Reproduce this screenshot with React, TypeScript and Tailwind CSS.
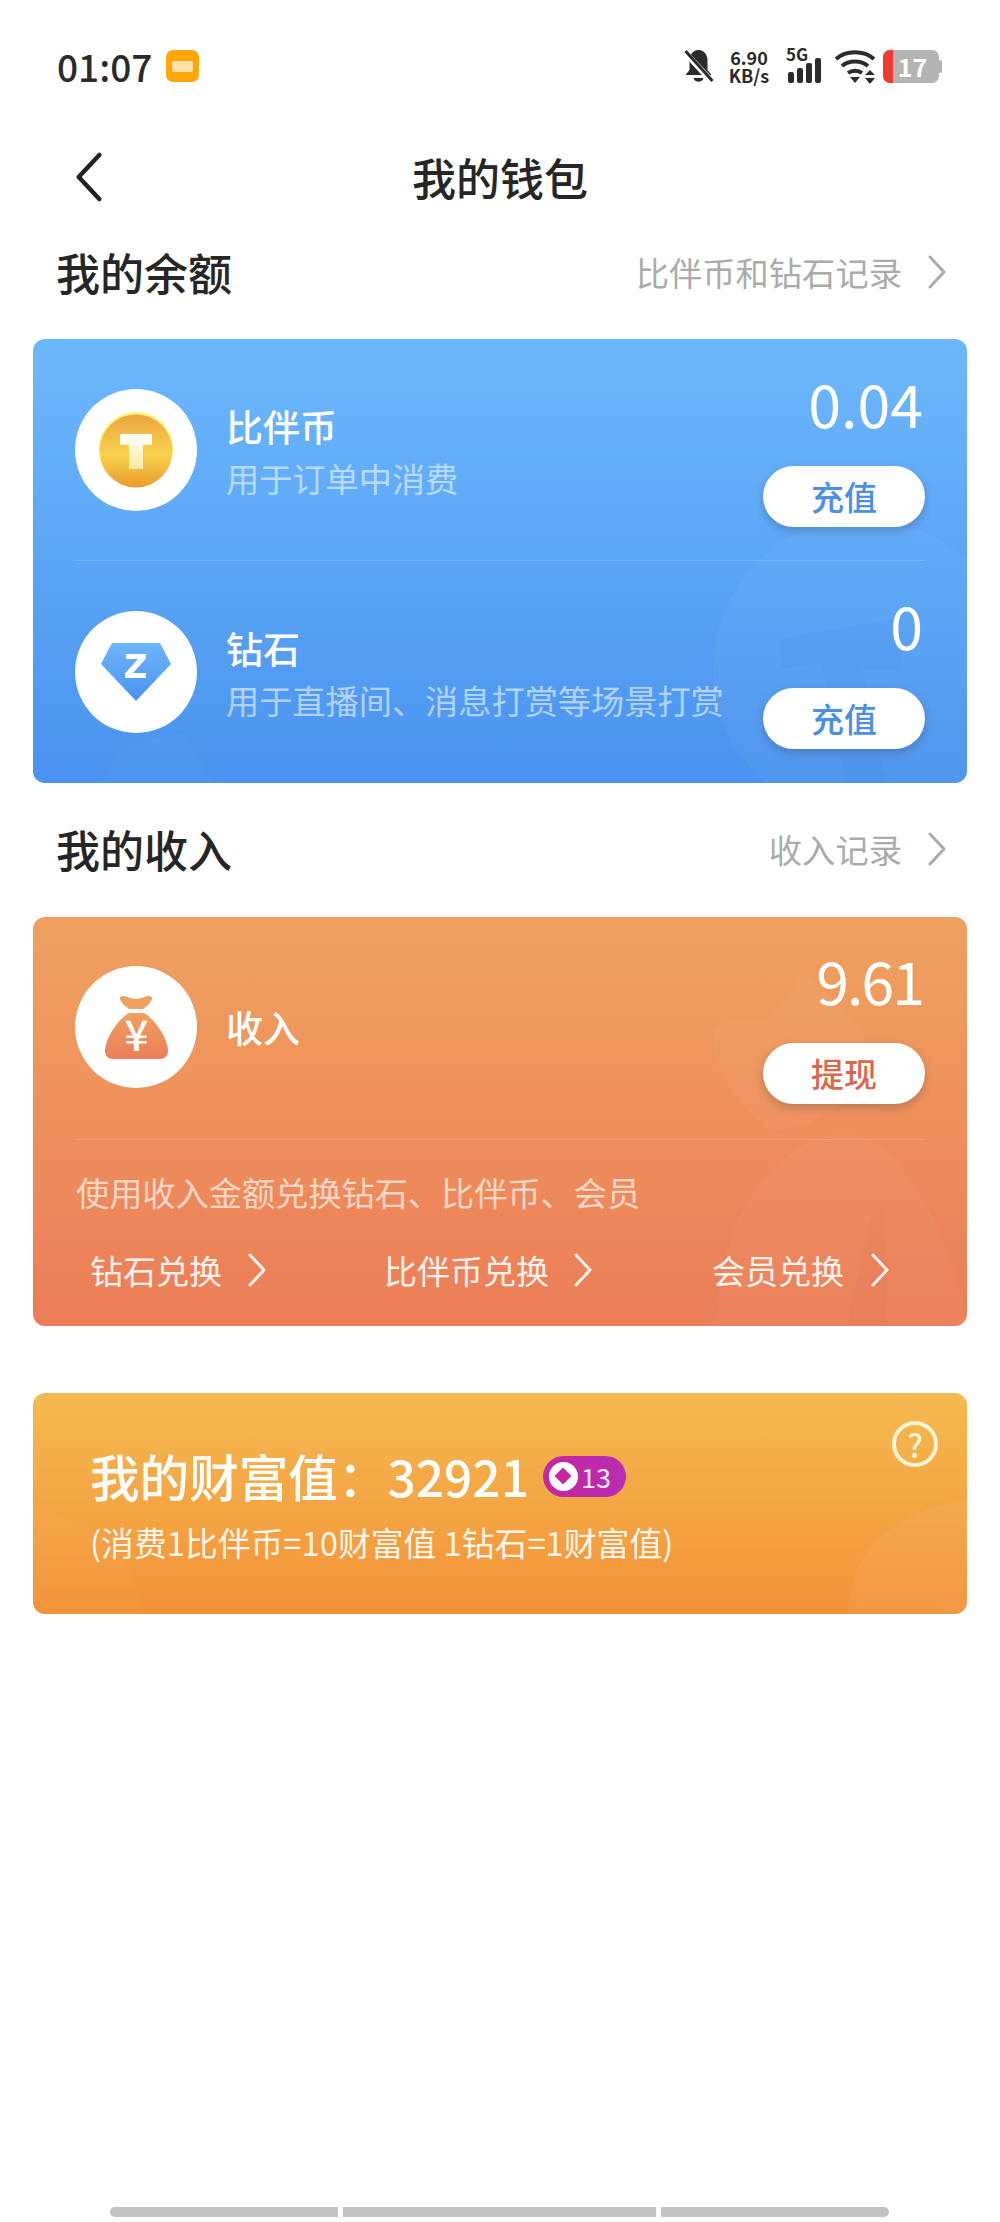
import { ReactNode } from "react";

function Chevron({ className = "", w = 20, h = 34, left = false }: { className?: string; w?: number; h?: number; left?: boolean }) {
  return (
    <svg width={w} height={h} viewBox="0 0 20 34" fill="none" className={className}>
      <path d={left ? "M17 2L3 17l14 15" : "M3 2l14 15L3 32"} stroke="currentColor" strokeWidth="3" strokeLinecap="round" strokeLinejoin="round" />
    </svg>
  );
}

function StatusBar() {
  return (
    <div className="flex h-[134px] items-center justify-between pb-[2px] pl-[57px] pr-[58px] text-[#2b2b2b]">
      <div className="flex items-center gap-[14px]">
        <span className="text-[37px] font-medium leading-none">01:07</span>
        <div className="flex h-[32px] w-[33px] items-center justify-center rounded-[7px] bg-[#ffa60a]">
          <div className="h-[11px] w-[21px] rounded-[2px] bg-[#ffe0a8]" />
        </div>
      </div>
      <div className="flex items-center">
        <svg width="33" height="36" viewBox="0 0 32 36">
          <path d="M16 2c-6 0-9 5-9 11v9l-4 5h26l-4-5v-9c0-6-3-11-9-11z" fill="#2b2b2b" />
          <path d="M11 30h10c-1 5-9 5-10 0z" fill="#2b2b2b" />
          <path d="M2 4l27 29" stroke="#fff" strokeWidth="6" />
          <path d="M3 3l27 30" stroke="#2b2b2b" strokeWidth="3" />
        </svg>
        <div className="ml-[11px] flex w-[46px] flex-col items-center text-[18px] font-bold leading-[18px]">
          <span>6.90</span>
          <span>KB/s</span>
        </div>
        <div className="relative ml-[14px] h-[34px] w-[38px]">
          <span className="absolute left-0 top-[-4px] text-[17px] font-bold leading-[18px]">5G</span>
          <svg width="38" height="34" viewBox="0 0 38 34" className="absolute left-0 top-0">
            <rect x="2" y="23" width="6" height="11" rx="2" fill="#2b2b2b" />
            <rect x="11" y="19" width="6" height="15" rx="2" fill="#2b2b2b" />
            <rect x="20" y="14" width="6" height="20" rx="2" fill="#2b2b2b" />
            <rect x="29" y="9" width="6" height="25" rx="2" fill="#2b2b2b" />
          </svg>
        </div>
        <svg width="44" height="36" viewBox="0 0 44 36" className="ml-[10px]">
          <g fill="none" stroke="#2b2b2b" strokeWidth="4">
            <path d="M2 11C12 2 30 2 40 11" />
            <path d="M8 18c7-6 19-6 26 0" />
            <path d="M14 25c4-3 10-3 14 0" />
          </g>
          <path d="M16 29h10l-5 6z" fill="#2b2b2b" />
          <path d="M36 22l5 5H31zM36 36l5-6H31z" fill="#2b2b2b" />
        </svg>
        <div className="relative ml-[5px] flex h-[33px] w-[56px] items-center justify-center rounded-[7px] bg-[#b4b4b4]">
          <div className="absolute inset-y-0 left-0 w-[10px] rounded-l-[7px] bg-[#ee3b2e]" />
          <span className="relative ml-[3px] text-[25px] font-bold leading-[33px] text-white">17</span>
        </div>
        <div className="h-[13px] w-[3px] rounded-r-[2px] bg-[#b4b4b4]" />
      </div>
    </div>
  );
}

function SectionHead({ title, link, className }: { title: string; link: string; className: string }) {
  return (
    <div className={`flex items-center justify-between pb-[3px] pl-[56px] pr-[53px] ${className}`}>
      <h2 className="text-[44px] font-medium leading-none text-[#262626]">{title}</h2>
      <div className="flex items-center gap-[25px] text-[#ababab]">
        <span className="text-[33.3px] leading-none">{link}</span>
        <Chevron />
      </div>
    </div>
  );
}

function CoinIcon() {
  return (
    <svg width="78" height="78" viewBox="0 0 78 78">
      <defs>
        <linearGradient id="coin" x1="0" y1="0" x2="0" y2="1">
          <stop offset="0" stopColor="#eca540" />
          <stop offset="0.55" stopColor="#f8d24e" />
          <stop offset="1" stopColor="#ea9a2c" />
        </linearGradient>
        <linearGradient id="coinT" x1="0" y1="0" x2="0" y2="1">
          <stop offset="0" stopColor="#ffffff" />
          <stop offset="1" stopColor="#fbe9a0" />
        </linearGradient>
      </defs>
      <circle cx="39" cy="38" r="37" fill="#fdf178" />
      <circle cx="39" cy="40" r="36.5" fill="url(#coin)" />
      <path d="M23 23h32v11H46v24H32V34h-9z" fill="url(#coinT)" />
    </svg>
  );
}

function DiamondIcon() {
  return (
    <svg width="72" height="60" viewBox="0 0 72 60">
      <defs>
        <linearGradient id="gem" x1="0" y1="0" x2="0" y2="1">
          <stop offset="0" stopColor="#6db6fb" />
          <stop offset="1" stopColor="#4a92ef" />
        </linearGradient>
      </defs>
      <path d="M12 1h48l11 21-35 37L1 22z" fill="url(#gem)" />
      <path d="M26 12h20v4.500L33 31h13v5H25v-4.500L38 17H26z" fill="#fff" />
    </svg>
  );
}

function BagIcon() {
  return (
    <svg width="65" height="64" viewBox="0 0 65 64" className="overflow-visible">
      <defs>
        <linearGradient id="bag" x1="0" y1="0" x2="0" y2="1">
          <stop offset="0" stopColor="#efa05f" />
          <stop offset="1" stopColor="#ec7e58" />
        </linearGradient>
      </defs>
      <path d="M19 1c4 0 8 3 13 3s9-3 13-3c3 0 4 2 2 5-2 4-6 6-8 8H25c-2-2-6-4-8-8-2-3-1-5 2-5z" fill="#efa05f" />
      <path d="M25 18h15c10 5 23 24 24 37 0 6-3 9-8 9H9c-5 0-8-3-8-9 1-13 14-32 24-37z" fill="url(#bag)" />
      <text x="32.500" y="56" textAnchor="middle" fontSize="42" fontWeight="500" fill="#fff" fontFamily="Noto Sans CJK SC, sans-serif">¥</text>
    </svg>
  );
}

function Avatar({ children }: { children: ReactNode }) {
  return (
    <div className="mt-[20px] flex h-[122px] w-[122px] shrink-0 items-center justify-center rounded-full bg-white">
      {children}
    </div>
  );
}

function Amount({ value, action, color, tight }: { value: string; action: string; color: string; tight?: boolean }) {
  return (
    <div className="ml-auto flex flex-col items-end">
      <span className={`mr-[2px] text-[59px] leading-[68px] text-white ${tight ? "tracking-[-2px]" : ""}`}>{value}</span>
      <button className={`mt-[29px] h-[61px] w-[162px] rounded-full bg-white text-[33px] font-medium leading-none shadow-[0_4px_8px_rgba(60,60,60,0.28)] ${color}`}>
        {action}
      </button>
    </div>
  );
}

function BalanceRow({ icon, title, sub, value }: { icon: ReactNode; title: string; sub: string; value: string }) {
  return (
    <div className="relative flex h-[221px] pl-[42px] pr-[42px] pt-[30px]">
      <Avatar>{icon}</Avatar>
      <div className="ml-[29px] mt-[34px]">
        <p className="text-[37px] font-medium leading-[47px] text-white">{title}</p>
        <p className="mt-[3px] text-[33.2px] leading-[50px] text-white/55">{sub}</p>
      </div>
      <Amount value={value} action="充值" color="text-[#4a8fe2]" />
    </div>
  );
}

function ExchangeLink({ label, gap }: { label: string; gap: string }) {
  return (
    <div className={`flex items-center text-white/90 ${gap}`}>
      <span className="text-[33px] leading-none">{label}</span>
      <Chevron />
    </div>
  );
}

export default function App() {
  return (
    <div className="flex min-h-[2222px] w-[1000px] flex-col overflow-hidden bg-white font-['Noto_Sans_CJK_SC',sans-serif]">
      <StatusBar />

      <div className="relative flex h-[88px] items-center justify-center pb-[2px]">
        <Chevron className="absolute left-[74px] top-[18px] text-[#222]" w={30} h={50} left />
        <h1 className="text-[44px] font-medium leading-none text-[#262626]">我的钱包</h1>
      </div>

      <SectionHead title="我的余额" link="比伴币和钻石记录" className="h-[102px]" />

      <section className="relative mx-[33px] mt-[15px] h-[444px] overflow-hidden rounded-[12px] bg-gradient-to-b from-[#6db8fc] to-[#4a92ef]">
        <svg width="934" height="444" viewBox="0 0 934 444" className="absolute inset-0">
          <circle cx="830" cy="330" r="150" fill="#fff" fillOpacity="0.035" />
          <path d="M745 300l120-20 4 50h-40l24 114h-40l-24-120-40 6z" fill="#3f86e0" fillOpacity="0.1" />
          <path d="M70 444l20-40 60-10 30 50z" fill="#fff" fillOpacity="0.025" />
        </svg>
        <div className="relative">
          <BalanceRow icon={<CoinIcon />} title="比伴币" sub="用于订单中消费" value="0.04" />
          <div className="mx-[42px] h-px bg-white/15" />
          <BalanceRow icon={<DiamondIcon />} title="钻石" sub="用于直播间、消息打赏等场景打赏" value="0" />
        </div>
      </section>

      <SectionHead title="我的收入" link="收入记录" className="h-[134px]" />

      <section className="relative mx-[33px] h-[409px] overflow-hidden rounded-[12px] bg-gradient-to-b from-[#efa15f] to-[#ec7d58]">
        <svg width="934" height="409" viewBox="0 0 934 409" className="absolute inset-0">
          <path d="M680 120c0-18 20-20 40-18 20 2 30-10 50-50 6 10 20 20 30 30l30 30c6 30-4 60-30 80-20 14-40 24-64 20-30-20-56-60-56-92z" fill="#fff" fillOpacity="0.035" />
          <path d="M683 409c0-80 37-180 127-193 60 0 110 114 124 184v9z" fill="#fff" fillOpacity="0.03" />
          <path d="M840 290h14v119h-40z" fill="#d9633f" fillOpacity="0.07" />
        </svg>
        <div className="relative">
          <div className="flex h-[222px] pl-[42px] pr-[42px] pt-[29px]">
            <Avatar><BagIcon /></Avatar>
            <p className="ml-[29px] mt-[56px] text-[37px] font-medium leading-[50px] text-white">收入</p>
            <Amount value="9.61" action="提现" color="text-[#d9684c]" tight />
          </div>
          <div className="mx-[42px] h-px bg-white/15" />
          <p className="ml-[43px] mt-[27px] text-[33.2px] leading-[50px] text-white/65">使用收入金额兑换钻石、比伴币、会员</p>
          <div className="mt-[36px] flex pl-[57px]">
            <ExchangeLink label="钻石兑换" gap="gap-[25px]" />
            <div className="ml-[117px]"><ExchangeLink label="比伴币兑换" gap="gap-[24px]" /></div>
            <div className="ml-[119px]"><ExchangeLink label="会员兑换" gap="gap-[26px]" /></div>
          </div>
        </div>
      </section>

      <section className="relative mx-[33px] mt-[67px] h-[221px] overflow-hidden rounded-[12px] bg-gradient-to-b from-[#f5ba50] to-[#f29138]">
        <svg width="934" height="221" viewBox="0 0 934 221" className="absolute inset-0">
          <path d="M815 221c0-60 40-100 119-115v115z" fill="#fff" fillOpacity="0.05" />
          <path d="M0 120c60 0 100 40 110 101H0z" fill="#fff" fillOpacity="0.025" />
        </svg>
        <div className="relative flex h-full flex-col pl-[57px]">
          <div className="mt-[57px] flex h-[52px] items-center">
            <span className="text-[49.6px] font-medium leading-none text-white">我的财富值：32921</span>
            <div className="ml-[14px] flex h-[41px] w-[83px] items-center rounded-full bg-gradient-to-r from-[#c4289f] to-[#b92cb4] pl-[6px]">
              <div className="flex h-[29px] w-[29px] items-center justify-center rounded-full bg-white">
                <div className="h-[12px] w-[12px] rotate-45 bg-[#c4289f]" />
              </div>
              <span className="ml-[3px] text-[27px] leading-none text-white/90">13</span>
            </div>
          </div>
          <p className="mt-[17px] text-[32.8px] leading-[46px] text-white/90">(消费1比伴币=10财富值 1钻石=1财富值)</p>
          <div className="absolute right-[29px] top-[28px] flex h-[46px] w-[46px] items-center justify-center rounded-full border-[4px] border-[#fff3d9] text-[32px] font-medium leading-none text-[#fff3d9]">?</div>
        </div>
      </section>

      <div className="mt-auto flex gap-[5px] pb-[5px] pl-[110px]">
        <div className="h-[10px] w-[228px] rounded-l-full bg-[#c2c2c2]" />
        <div className="h-[10px] w-[313px] bg-[#c2c2c2]" />
        <div className="h-[10px] w-[228px] rounded-r-full bg-[#c2c2c2]" />
      </div>
    </div>
  );
}
